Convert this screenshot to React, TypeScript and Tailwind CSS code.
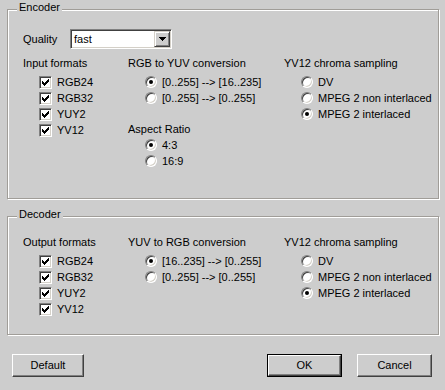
import type { ReactNode } from 'react'

const font = "font-['Liberation_Sans',Arial,sans-serif] text-[11px] leading-[13px] text-black"

function GroupBox({ title, className, children }: { title: string; className: string; children: ReactNode }) {
  return (
    <div
      className={`relative w-[432px] border border-[#a09d98] shadow-[1px_1px_0_#ffffff,inset_1px_1px_0_#ffffff] ${className}`}
    >
      {/* caption sits on top of the etched line */}
      <span className="absolute -top-[9px] left-[9px] px-[2px] bg-[#cdcdcd]">{title}</span>
      {children}
    </div>
  )
}

function CheckBox({ label }: { label: string }) {
  return (
    <div className="flex items-center h-[16px] pl-[16px]">
      <div className="w-[13px] h-[13px] border border-t-[#808080] border-l-[#808080] border-r-white border-b-white bg-white shadow-[inset_1px_1px_0_#404040,inset_-1px_-1px_0_#d4d0c8] flex items-center justify-center">
        <svg width="7" height="7" viewBox="0 0 7 7" shapeRendering="crispEdges">
          <path
            d="M6 0h1v1H6z M5 1h2v1H5z M0 2h1v1H0z M4 2h3v1H4z M0 3h2v1H0z M3 3h3v1H3z M0 4h5v1H0z M1 5h3v1H1z M2 6h1v1H2z"
            fill="#000"
          />
        </svg>
      </div>
      <span className="ml-[5px]">{label}</span>
    </div>
  )
}

function Radio({ label, checked = false }: { label: string; checked?: boolean }) {
  return (
    <div className="flex items-center h-[16px] pl-[17px]">
      <div className="w-[12px] h-[12px] rounded-full border border-t-[#808080] border-l-[#808080] border-r-white border-b-white bg-white shadow-[inset_1px_1px_0_#404040,inset_-1px_-1px_0_#d4d0c8] flex items-center justify-center">
        {checked && <div className="w-[4px] h-[4px] rounded-full bg-black" />}
      </div>
      <span className="ml-[5px]">{label}</span>
    </div>
  )
}

function Button({ label, isDefault = false }: { label: string; isDefault?: boolean }) {
  const face = (
    <div className="flex-1 flex items-center justify-center border border-t-white border-l-white border-r-[#404040] border-b-[#404040] shadow-[inset_-1px_-1px_0_#808080] bg-[#cdcdcd]">
      {label}
    </div>
  )
  if (isDefault) {
    return <div className="w-[75px] h-[23px] flex border border-black">{face}</div>
  }
  return <div className={`${label === 'Default' ? 'w-[72px]' : 'w-[75px]'} h-[23px] flex`}>{face}</div>
}

function Combo({ value }: { value: string }) {
  return (
    <div className="w-[102px] h-[20px] flex border border-t-[#808080] border-l-[#808080] border-r-white border-b-white shadow-[inset_1px_1px_0_#404040,inset_-1px_-1px_0_#d4d0c8] bg-white p-[1px]">
      <span className="flex-1 pl-[2px] leading-[16px]">{value}</span>
      <div className="w-[16px] h-[16px] flex items-center justify-center border border-t-[#d4d0c8] border-l-[#d4d0c8] border-r-[#404040] border-b-[#404040] shadow-[inset_1px_1px_0_#ffffff,inset_-1px_-1px_0_#808080] bg-[#cdcdcd]">
        <svg width="7" height="4" viewBox="0 0 7 4" shapeRendering="crispEdges">
          <path d="M0 0h7v1H0z M1 1h5v1H1z M2 2h3v1H2z M3 3h1v1H3z" fill="#000" />
        </svg>
      </div>
    </div>
  )
}

export default function App() {
  return (
    <div className={`w-[445px] h-[390px] bg-[#cdcdcd] pt-[9px] pl-[7px] ${font}`}>
      {/* Encoder */}
      <GroupBox title="Encoder" className="h-[190px]">
        <div className="pl-[15px] pt-[19px]">
          <div className="flex items-center">
            <span className="w-[47px]">Quality</span>
            <Combo value="fast" />
          </div>
          <div className="flex mt-[8px]">
            <div className="w-[105px]">
              <div>Input formats</div>
              <div className="mt-[4px]">
                <CheckBox label="RGB24" />
                <CheckBox label="RGB32" />
                <CheckBox label="YUY2" />
                <CheckBox label="YV12" />
              </div>
            </div>
            <div className="w-[156px]">
              <div>RGB to YUV conversion</div>
              <div className="mt-[4px]">
                <Radio label="[0..255] --> [16..235]" checked />
                <Radio label="[0..255] --> [0..255]" />
              </div>
              <div className="mt-[17px]">Aspect Ratio</div>
              <div className="mt-[1px]">
                <Radio label="4:3" checked />
                <Radio label="16:9" />
              </div>
            </div>
            <div className="flex-1">
              <div>YV12 chroma sampling</div>
              <div className="mt-[4px]">
                <Radio label="DV" />
                <Radio label="MPEG 2 non interlaced" />
                <Radio label="MPEG 2 interlaced" checked />
              </div>
            </div>
          </div>
        </div>
      </GroupBox>

      {/* Decoder */}
      <GroupBox title="Decoder" className="h-[119px] mt-[17px]">
        <div className="pl-[15px] pt-[19px] flex">
          <div className="w-[105px]">
            <div>Output formats</div>
            <div className="mt-[4px]">
              <CheckBox label="RGB24" />
              <CheckBox label="RGB32" />
              <CheckBox label="YUY2" />
              <CheckBox label="YV12" />
            </div>
          </div>
          <div className="w-[156px]">
            <div>YUV to RGB conversion</div>
            <div className="mt-[4px]">
              <Radio label="[16..235] --> [0..255]" checked />
              <Radio label="[0..255] --> [0..255]" />
            </div>
          </div>
          <div className="flex-1">
            <div>YV12 chroma sampling</div>
            <div className="mt-[4px]">
              <Radio label="DV" />
              <Radio label="MPEG 2 non interlaced" />
              <Radio label="MPEG 2 interlaced" checked />
            </div>
          </div>
        </div>
      </GroupBox>

      {/* Buttons */}
      <div className="w-[432px] flex mt-[19px] pl-[5px] pr-[7px]">
        <Button label="Default" />
        <div className="ml-auto">
          <Button label="OK" isDefault />
        </div>
        <div className="ml-[15px]">
          <Button label="Cancel" />
        </div>
      </div>
    </div>
  )
}
